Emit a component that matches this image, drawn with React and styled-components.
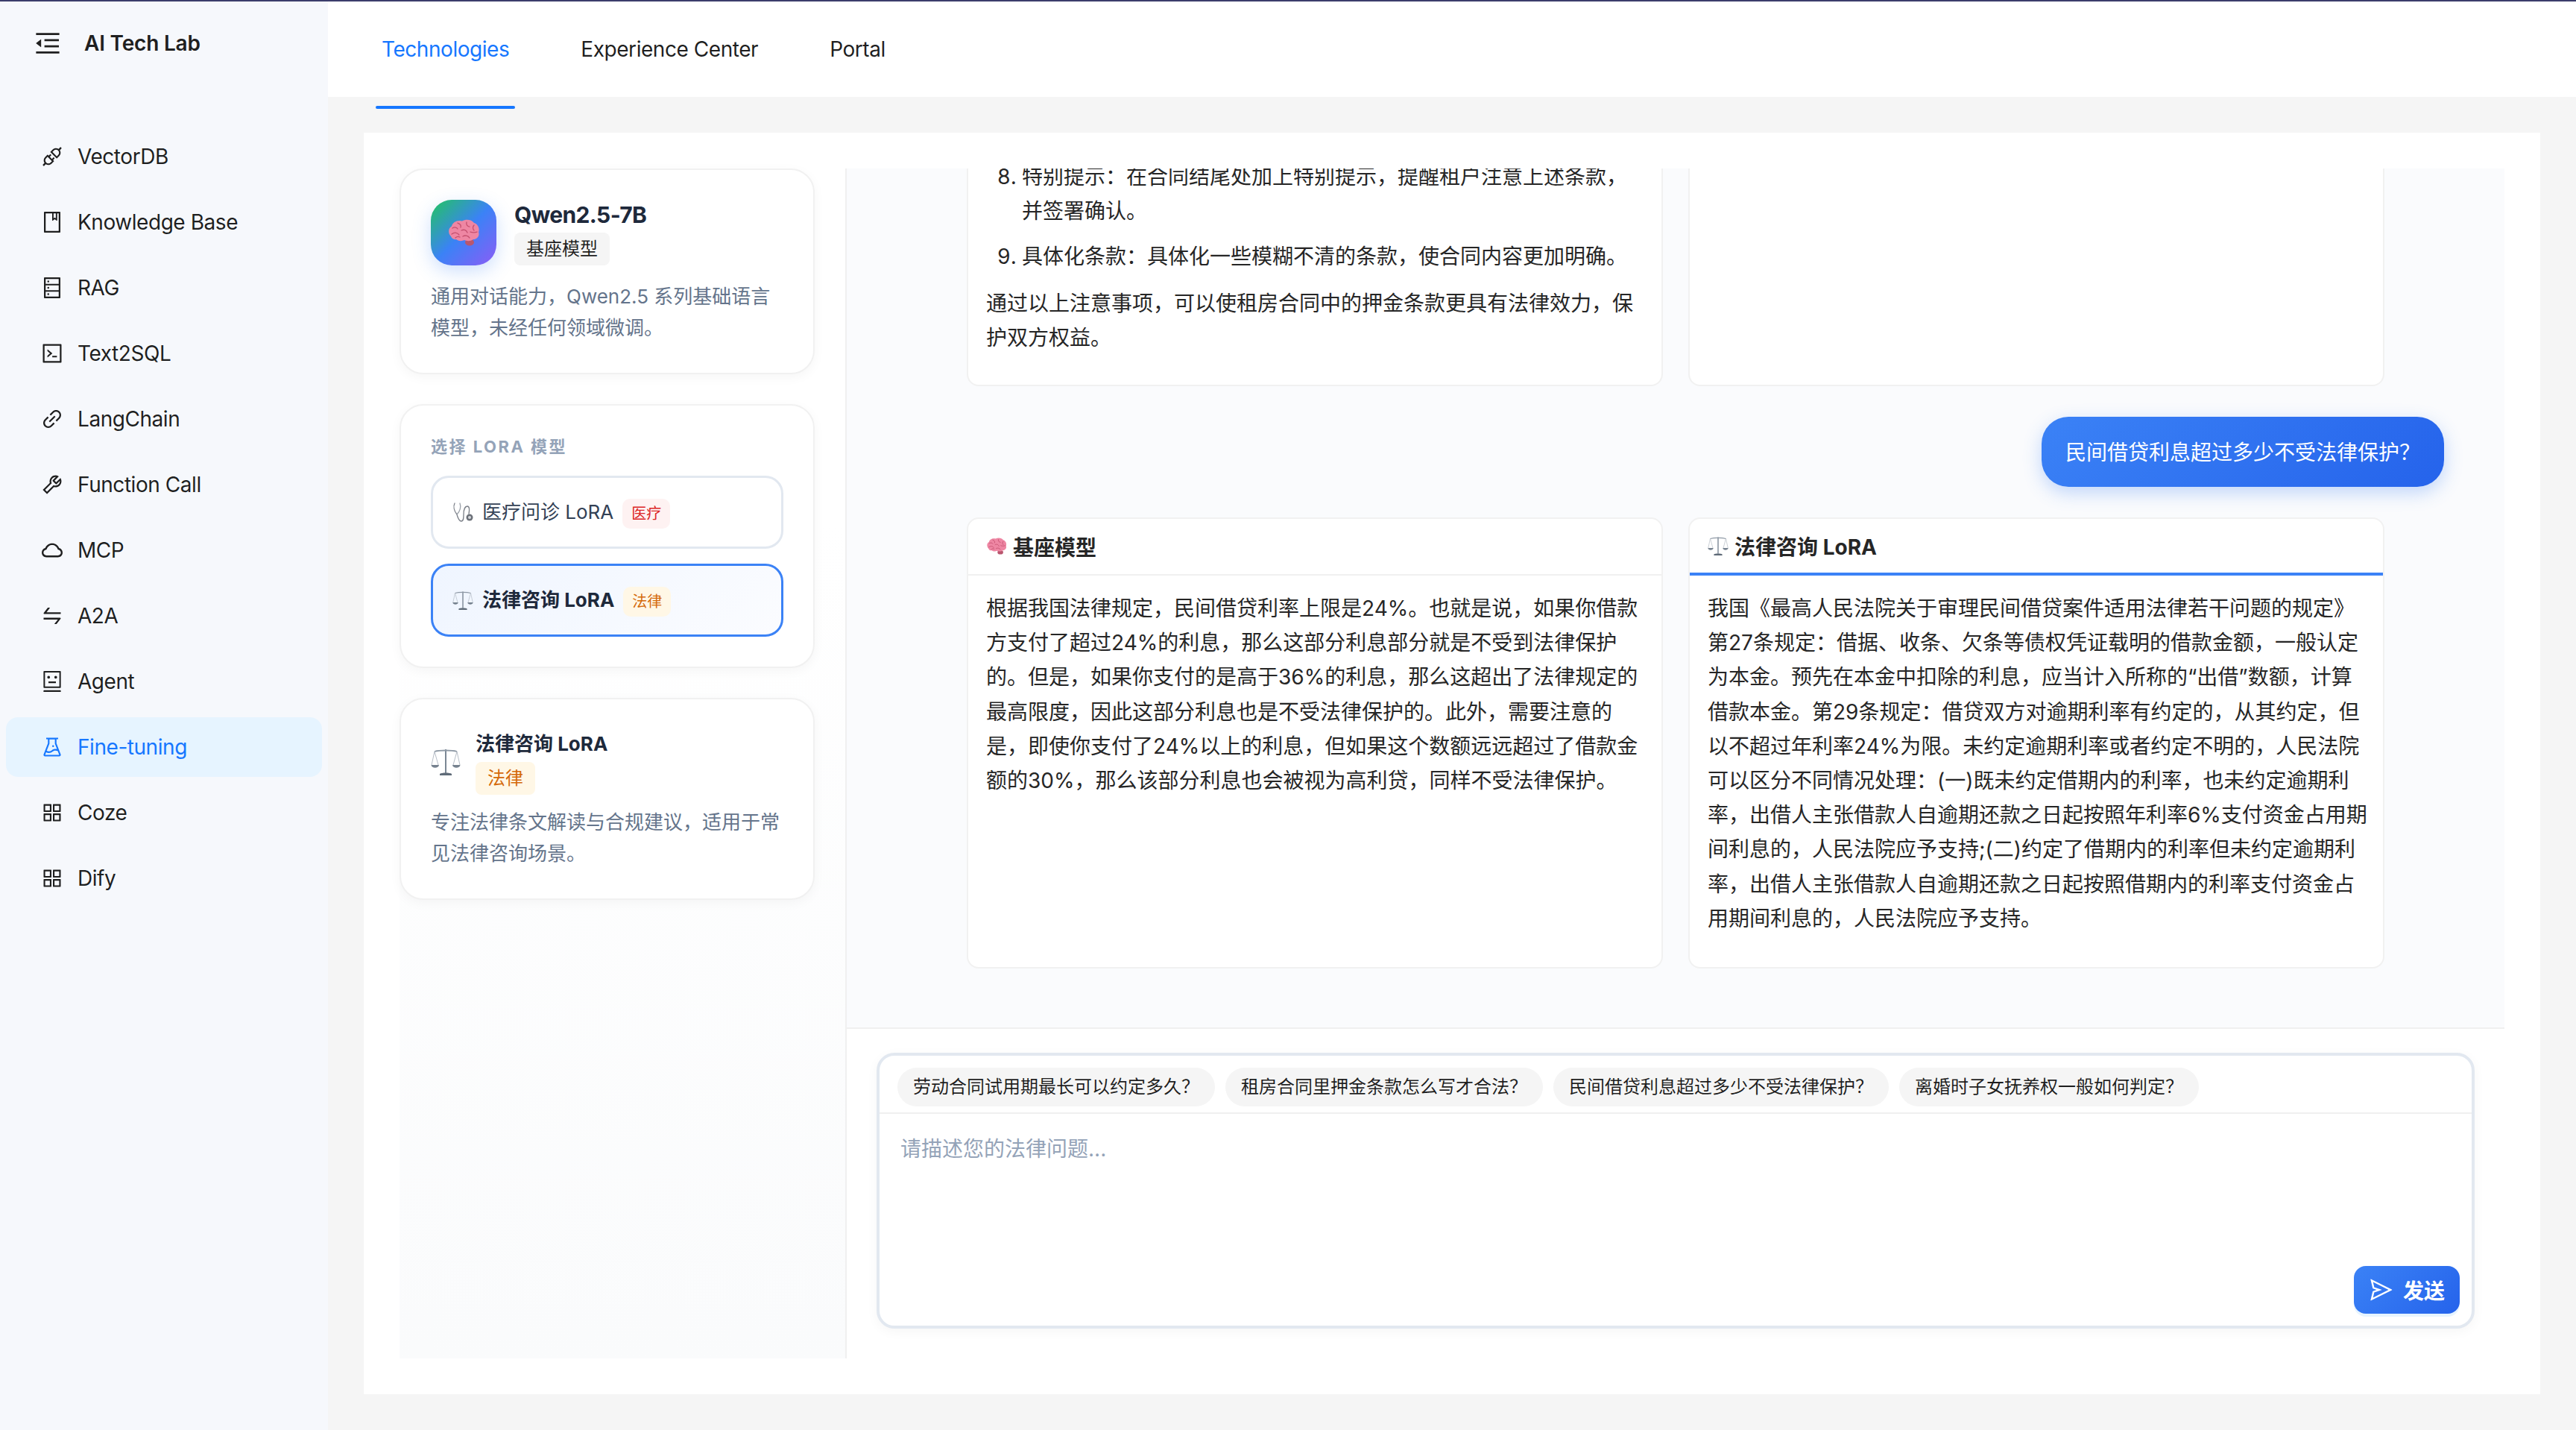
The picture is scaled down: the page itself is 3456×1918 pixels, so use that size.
import React from 'react';
import styled, { createGlobalStyle } from 'styled-components';
import {
  AiOutlineApi,
  AiOutlineAppstore,
  AiOutlineBook,
  AiOutlineCloud,
  AiOutlineCode,
  AiOutlineDatabase,
  AiOutlineExperiment,
  AiOutlineLink,
  AiOutlineMenuFold,
  AiOutlineRobot,
  AiOutlineSend,
  AiOutlineSwap,
  AiOutlineTool,
} from 'react-icons/ai';

const GlobalStyle = createGlobalStyle`
  html, body {
    margin: 0;
    padding: 0;
    height: 100%;
  }
  body {
    font-family: Inter, "Noto Sans CJK SC", sans-serif;
    color: rgba(0, 0, 0, 0.88);
    -webkit-font-smoothing: antialiased;
  }
  * {
    box-sizing: border-box;
  }
`;

const Shell = styled.div`
  display: flex;
  height: 100vh;
  overflow: hidden;
  background: #f5f5f5;
  border-top: 2px solid #3b3d6b;
`;

const Sidebar = styled.aside`
  flex: 0 0 440px;
  background: #f6f8fc;
`;

const Brand = styled.div`
  display: flex;
  align-items: center;
  gap: 29px;
  height: 112px;
  padding-left: 44px;
  font-size: 28px;
  font-weight: 600;
  letter-spacing: -0.2px;
  color: #1f1f1f;
  svg {
    font-size: 40px;
  }
`;

const Menu = styled.nav`
  display: flex;
  flex-direction: column;
  gap: 8px;
  margin-top: 56px;
  padding: 0 8px;
`;

const MenuItem = styled.a`
  display: flex;
  align-items: center;
  gap: 18px;
  height: 80px;
  padding-left: 46px;
  border-radius: 16px;
  font-size: 28px;
  letter-spacing: -0.45px;
  color: ${(p) => (p.$active ? '#1677ff' : 'rgba(0, 0, 0, 0.88)')};
  background: ${(p) => (p.$active ? '#e6f4ff' : 'transparent')};
  svg {
    font-size: 32px;
    flex: none;
  }
`;

const Main = styled.main`
  flex: 1;
  min-width: 0;
  display: flex;
  flex-direction: column;
`;

const TopBar = styled.header`
  display: flex;
  gap: 80px;
  flex: 0 0 128px;
  padding-left: 64px;
  background: #fff;
`;

const Tab = styled.a`
  position: relative;
  display: flex;
  align-items: center;
  padding: 0 8px;
  font-size: 28px;
  letter-spacing: -0.45px;
  color: ${(p) => (p.$active ? '#1677ff' : 'rgba(0, 0, 0, 0.88)')};
  &::after {
    content: '';
    display: ${(p) => (p.$active ? 'block' : 'none')};
    position: absolute;
    left: 0;
    right: 0;
    bottom: -16px;
    height: 4px;
    border-radius: 2px;
    background: #1677ff;
  }
`;

const Content = styled.div`
  flex: 1;
  min-height: 0;
  display: flex;
  padding: 48px;
`;

const Panel = styled.section`
  flex: 1;
  min-width: 0;
  display: flex;
  padding: 48px;
  background: #fff;
`;

const ModelColumn = styled.div`
  flex: 0 0 600px;
  display: flex;
  flex-direction: column;
  gap: 40px;
  padding-right: 41px;
  border-right: 2px solid #f0f0f0;
  background: linear-gradient(180deg, #fff 0%, #fff 30%, #fafbfc 100%);
`;

const Card = styled.div`
  padding: 40px;
  border: 2px solid #f1f1f1;
  border-radius: 32px;
  background: #fff;
  box-shadow: 0 4px 16px rgba(0, 0, 0, 0.04);
`;

const ModelHead = styled.div`
  display: flex;
  align-items: center;
  gap: ${(p) => p.$gap || 24}px;
`;

const Avatar = styled.div`
  flex: none;
  display: flex;
  align-items: center;
  justify-content: center;
  width: 88px;
  height: 88px;
  border-radius: 28px;
  background: linear-gradient(135deg, #22c55e 0%, #3b82f6 50%, #8b5cf6 100%);
  box-shadow: 0 8px 24px rgba(59, 130, 246, 0.25);
`;

const ModelInfo = styled.div`
  display: flex;
  flex-direction: column;
  align-items: flex-start;
`;

const ModelName = styled.div`
  margin-bottom: 4px;
  font-size: ${(p) => (p.$large ? 30 : 26)}px;
  line-height: 40px;
  font-weight: 700;
  letter-spacing: ${(p) => (p.$large ? '-0.6px' : '0')};
  color: #1e293b;
`;

const Tag = styled.span`
  padding: 0 16px;
  border-radius: 8px;
  font-size: 24px;
  line-height: 44px;
  color: ${(p) => p.$color || 'rgba(0, 0, 0, 0.88)'};
  background: ${(p) => p.$bg || '#f5f5f5'};
`;

const ModelDesc = styled.p`
  margin: ${(p) => p.$top || 16}px 0 0;
  font-size: 26px;
  line-height: 41.6px;
  color: #64748b;
`;

const SectionLabel = styled.div`
  margin-bottom: 24px;
  font-size: 22px;
  line-height: 30px;
  font-weight: 700;
  letter-spacing: 2.5px;
  text-transform: uppercase;
  color: #94a3b8;
`;

const OptionList = styled.div`
  display: flex;
  flex-direction: column;
  gap: 20px;
`;

const Option = styled.button`
  display: flex;
  align-items: center;
  gap: 12px;
  height: 98px;
  padding: 0 26px;
  border: 3px solid ${(p) => (p.$active ? '#3b82f6' : '#e2e8f0')};
  border-radius: 24px;
  background: ${(p) => (p.$active ? 'linear-gradient(135deg, #eff5ff 0%, #fbfcff 100%)' : '#fff')};
  font-family: inherit;
  font-size: 26px;
  font-weight: ${(p) => (p.$active ? 700 : 400)};
  color: ${(p) => (p.$active ? '#1e293b' : '#334155')};
`;

const OptionName = styled.span`
  margin-bottom: 5px;
`;

const SmallTag = styled.span`
  flex: none;
  margin-top: 4px;
  padding: 0 12px;
  border-radius: 10px;
  font-size: 20px;
  line-height: 40px;
  font-weight: 400;
  color: ${(p) => p.$color};
  background: ${(p) => p.$bg};
`;

const ChatColumn = styled.div`
  flex: 1;
  min-width: 0;
  display: flex;
  flex-direction: column;
`;

const ChatScroll = styled.div`
  flex: 1;
  min-height: 0;
  display: flex;
  flex-direction: column;
  justify-content: flex-end;
  gap: 41px;
  overflow: hidden;
  padding: 0 81px 79px;
  background: #fafbfd;
  border-bottom: 2px solid #f0f0f0;
`;

const AnswerRow = styled.div`
  flex: none;
  display: grid;
  grid-template-columns: 934px 934px;
  justify-content: center;
  gap: 34px;
`;

const AnswerCard = styled.div`
  border: 2px solid #f1f1f1;
  border-radius: 16px;
  background: #fff;
  overflow: hidden;
`;

const AnswerHead = styled.div`
  display: flex;
  align-items: center;
  gap: 8px;
  height: 76px;
  padding: 0 24px;
  border-bottom: ${(p) => (p.$active ? '4px solid #3b82f6' : '2px solid #f0f0f0')};
  font-size: 28px;
  font-weight: 700;
  color: #262626;
`;

const AnswerBody = styled.div`
  padding: 21px 20px 24px 24px;
  font-size: 28px;
  line-height: 46.2px;
  color: #262626;
  p {
    margin: 0 0 ${(p) => p.$tail || 18}px;
  }
  ol {
    margin: 0 0 16px;
    padding-left: 48px;
  }
  li {
    margin-bottom: 15px;
  }
`;

const Bubble = styled.div`
  flex: none;
  align-self: flex-end;
  padding: 25px 32px 23px;
  border-radius: 36px;
  font-size: 28px;
  line-height: 46px;
  color: #fff;
  background: linear-gradient(135deg, #3b82f6 0%, #2563eb 100%);
  box-shadow: 0 8px 24px rgba(59, 130, 246, 0.3);
`;

const ComposerWrap = styled.div`
  padding: 32px 40px 40px;
  background: #fff;
`;

const Composer = styled.div`
  position: relative;
  display: flex;
  flex-direction: column;
  height: 370px;
  border: 4px solid #e2e8f0;
  border-radius: 24px;
  background: #fff;
  box-shadow: 0 4px 16px rgba(0, 0, 0, 0.04);
`;

const Suggestions = styled.div`
  display: flex;
  gap: 14px;
  padding: 16px 24px 8px;
  border-bottom: 2px solid #f0f0f0;
`;

const Chip = styled.span`
  padding: 0 21px;
  border-radius: 26px;
  font-size: 24px;
  line-height: 52px;
  background: #f5f5f5;
`;

const Input = styled.textarea`
  flex: 1;
  padding: 24px 28px;
  border: 0;
  outline: 0;
  resize: none;
  background: transparent;
  font-family: inherit;
  font-size: 28px;
  line-height: 46px;
  &::placeholder {
    color: #94a3b8;
    opacity: 1;
  }
`;

const SendButton = styled.button`
  position: absolute;
  right: 16px;
  bottom: 16px;
  display: flex;
  align-items: center;
  justify-content: center;
  gap: 12px;
  width: 142px;
  height: 64px;
  border: 0;
  border-radius: 16px;
  font-family: inherit;
  font-size: 28px;
  font-weight: 700;
  color: #fff;
  background: linear-gradient(135deg, #3b82f6 0%, #2563eb 100%);
  box-shadow: 0 4px 0 rgba(5, 145, 255, 0.1);
  svg {
    font-size: 34px;
  }
`;

const Brain = ({ size = 44 }) => (
  <svg width={size} height={size * 0.82} viewBox="0 0 44 36" style={{ flex: 'none' }}>
    <ellipse cx="30" cy="31" rx="6" ry="4.5" fill="#b9566e" />
    <path
      d="M5 23C1 19 1 12 6 9.500C7 4 14 0.500 20 2.500C25 -0.500 33 0.500 36 5C41 6.500 44 12 42 17.500C44 22 40 27 35 27C31 30 26 29.500 23 28C19 30 14 29 12 27C9 27.500 6 26 5 23Z"
      fill="#ee86a3"
    />
    <path
      d="M7 12C10 10 13 11 14 13M14 5C17 6 19 8 18 11M26 4C25 7 27 10 30 10M36 8C34 10 34 13 36 15M6 20C10 17 14 18 16 21M19 15C23 13 26 15 27 18M31 17C34 18 37 18 40 17M21 23C24 21 28 22 30 25M11 25C13 23 15 23 17 24"
      fill="none"
      stroke="#c4506f"
      strokeWidth="1.300"
      strokeLinecap="round"
    />
  </svg>
);

const Scales = ({ size = 28 }) => (
  <svg width={size} height={size * 0.95} viewBox="0 0 40 38" fill="none" style={{ flex: 'none' }}>
    <path d="M20 2V34" stroke="#7b8794" strokeWidth="2" />
    <path d="M5 5C12 3 28 3 35 5" stroke="#8e99a5" strokeWidth="1.800" />
    <path d="M5 5L1 23M5 5L10 23M35 5L30 23M35 5L39 23" stroke="#aeb6bf" strokeWidth="0.900" />
    <path d="M0.500 23H11C10.500 28 1 28 0.500 23ZM29 23H39.500C39 28 29.500 28 29 23Z" fill="#76828f" />
    <path d="M12 35C14 33 26 33 28 35V37H12Z" fill="#5f6b78" />
  </svg>
);

const Stethoscope = ({ size = 28 }) => (
  <svg width={size} height={size} viewBox="0 0 28 28" fill="none" style={{ flex: 'none' }}>
    <path
      d="M3 2C1 6 2 12 6 17C7 21 9 26 12 26C15 26 15 22 15 17C15 10 17 6 20 6C23 6 23 11 22 16"
      stroke="#7a7f87"
      strokeWidth="1.300"
      strokeLinecap="round"
    />
    <path d="M10 2C12 7 10 13 6 17" stroke="#9aa0a8" strokeWidth="1.300" strokeLinecap="round" />
    <circle cx="23" cy="21" r="4.500" fill="#6b7078" />
    <circle cx="23" cy="21" r="2" fill="#d6d9dd" />
  </svg>
);

const menuItems = [
  { label: 'VectorDB', icon: AiOutlineApi },
  { label: 'Knowledge Base', icon: AiOutlineBook },
  { label: 'RAG', icon: AiOutlineDatabase },
  { label: 'Text2SQL', icon: AiOutlineCode },
  { label: 'LangChain', icon: AiOutlineLink },
  { label: 'Function Call', icon: AiOutlineTool },
  { label: 'MCP', icon: AiOutlineCloud },
  { label: 'A2A', icon: AiOutlineSwap },
  { label: 'Agent', icon: AiOutlineRobot },
  { label: 'Fine-tuning', icon: AiOutlineExperiment, active: true },
  { label: 'Coze', icon: AiOutlineAppstore },
  { label: 'Dify', icon: AiOutlineAppstore },
];

const suggestions = [
  '劳动合同试用期最长可以约定多久？',
  '租房合同里押金条款怎么写才合法？',
  '民间借贷利息超过多少不受法律保护？',
  '离婚时子女抚养权一般如何判定？',
];

const baseAnswer =
  '根据我国法律规定，民间借贷利率上限是24%。也就是说，如果你借款方支付了超过24%的利息，那么这部分利息部分就是不受到法律保护的。但是，如果你支付的是高于36%的利息，那么这超出了法律规定的最高限度，因此这部分利息也是不受法律保护的。此外，需要注意的是，即使你支付了24%以上的利息，但如果这个数额远远超过了借款金额的30%，那么该部分利息也会被视为高利贷，同样不受法律保护。';

const loraAnswer =
  '我国《最高人民法院关于审理民间借贷案件适用法律若干问题的规定》第27条规定：借据、收条、欠条等债权凭证载明的借款金额，一般认定为本金。预先在本金中扣除的利息，应当计入所称的“出借”数额，计算借款本金。第29条规定：借贷双方对逾期利率有约定的，从其约定，但以不超过年利率24%为限。未约定逾期利率或者约定不明的，人民法院可以区分不同情况处理：(一)既未约定借期内的利率，也未约定逾期利率，出借人主张借款人自逾期还款之日起按照年利率6%支付资金占用期间利息的，人民法院应予支持;(二)约定了借期内的利率但未约定逾期利率，出借人主张借款人自逾期还款之日起按照借期内的利率支付资金占用期间利息的，人民法院应予支持。';

const App = () => (
  <>
    <GlobalStyle />
    <Shell>
      <Sidebar>
        <Brand>
          <AiOutlineMenuFold />
          AI Tech Lab
        </Brand>
        <Menu>
          {menuItems.map(({ label, icon: Icon, active }) => (
            <MenuItem key={label} $active={active}>
              <Icon />
              {label}
            </MenuItem>
          ))}
        </Menu>
      </Sidebar>
      <Main>
        <TopBar>
          <Tab $active>Technologies</Tab>
          <Tab>Experience Center</Tab>
          <Tab>Portal</Tab>
        </TopBar>
        <Content>
          <Panel>
            <ModelColumn>
              <Card>
                <ModelHead>
                  <Avatar>
                    <Brain />
                  </Avatar>
                  <ModelInfo>
                    <ModelName $large>Qwen2.5-7B</ModelName>
                    <Tag>基座模型</Tag>
                  </ModelInfo>
                </ModelHead>
                <ModelDesc $top={21}>通用对话能力，Qwen2.5 系列基础语言模型，未经任何领域微调。</ModelDesc>
              </Card>
              <Card>
                <SectionLabel>选择 LoRA 模型</SectionLabel>
                <OptionList>
                  <Option>
                    <Stethoscope />
                    <OptionName>医疗问诊 LoRA</OptionName>
                    <SmallTag $color="#dc2626" $bg="#fef2f2">医疗</SmallTag>
                  </Option>
                  <Option $active>
                    <Scales />
                    <OptionName>法律咨询 LoRA</OptionName>
                    <SmallTag $color="#d4690a" $bg="#fff7e6">法律</SmallTag>
                  </Option>
                </OptionList>
              </Card>
              <Card>
                <ModelHead $gap={20}>
                  <Scales size={40} />
                  <ModelInfo>
                    <ModelName>法律咨询 LoRA</ModelName>
                    <Tag $color="#d4690a" $bg="#fff7e6">法律</Tag>
                  </ModelInfo>
                </ModelHead>
                <ModelDesc>专注法律条文解读与合规建议，适用于常见法律咨询场景。</ModelDesc>
              </Card>
            </ModelColumn>
            <ChatColumn>
              <ChatScroll>
                <AnswerRow>
                  <AnswerCard>
                    <AnswerBody $tail={16}>
                      <ol start={8}>
                        <li>特别提示：在合同结尾处加上特别提示，提醒租户注意上述条款，并签署确认。</li>
                        <li>具体化条款：具体化一些模糊不清的条款，使合同内容更加明确。</li>
                      </ol>
                      <p>通过以上注意事项，可以使租房合同中的押金条款更具有法律效力，保护双方权益。</p>
                    </AnswerBody>
                  </AnswerCard>
                  <AnswerCard />
                </AnswerRow>
                <Bubble>民间借贷利息超过多少不受法律保护？</Bubble>
                <AnswerRow>
                  <AnswerCard>
                    <AnswerHead>
                      <Brain size={28} />
                      基座模型
                    </AnswerHead>
                    <AnswerBody>
                      <p>{baseAnswer}</p>
                    </AnswerBody>
                  </AnswerCard>
                  <AnswerCard>
                    <AnswerHead $active>
                      <Scales />
                      法律咨询 LoRA
                    </AnswerHead>
                    <AnswerBody>
                      <p>{loraAnswer}</p>
                    </AnswerBody>
                  </AnswerCard>
                </AnswerRow>
              </ChatScroll>
              <ComposerWrap>
                <Composer>
                  <Suggestions>
                    {suggestions.map((text) => (
                      <Chip key={text}>{text}</Chip>
                    ))}
                  </Suggestions>
                  <Input placeholder="请描述您的法律问题..." />
                  <SendButton>
                    <AiOutlineSend />
                    发送
                  </SendButton>
                </Composer>
              </ComposerWrap>
            </ChatColumn>
          </Panel>
        </Content>
      </Main>
    </Shell>
  </>
);

export default App;
